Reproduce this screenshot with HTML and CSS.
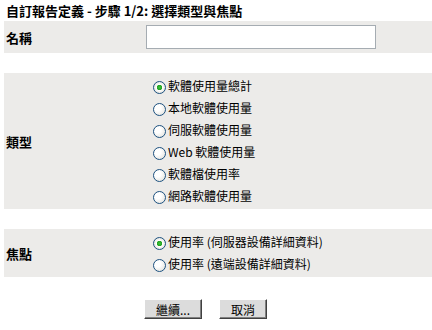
FILE: index.html
```html
<!DOCTYPE html>
<html lang="zh-Hant">
  <head>
    <meta charset="UTF-8" />
    <title>自訂報告定義</title>
    <link rel="stylesheet" href="styles.css">
  </head>
  <body>
    <h1 class="title">自訂報告定義 - 步驟 1/2: 選擇類型與焦點</h1>
    <form class="form">
      <div class="row row-name">
        <label class="label" for="name">名稱</label>
        <div class="value">
          <input class="text" id="name" type="text" autofocus>
        </div>
      </div>
      <div class="gap"></div>
      <div class="row row-list">
        <span class="label">類型</span>
        <div class="value">
          <label class="opt"><input type="radio" name="type" checked>軟體使用量總計</label>
          <label class="opt"><input type="radio" name="type">本地軟體使用量</label>
          <label class="opt"><input type="radio" name="type">伺服軟體使用量</label>
          <label class="opt"><input type="radio" name="type">Web 軟體使用量</label>
          <label class="opt"><input type="radio" name="type">軟體檔使用率</label>
          <label class="opt"><input type="radio" name="type">網路軟體使用量</label>
        </div>
      </div>
      <div class="gap"></div>
      <div class="row row-list">
        <span class="label">焦點</span>
        <div class="value">
          <label class="opt"><input type="radio" name="focus" checked>使用率 (伺服器設備詳細資料)</label>
          <label class="opt"><input type="radio" name="focus">使用率 (遠端設備詳細資料)</label>
        </div>
      </div>
      <div class="buttons">
        <button type="button" class="btn">繼續...</button>
        <button type="button" class="btn">取消</button>
      </div>
    </form>
  </body>
</html>
```

FILE: styles.css
```css
* {
  margin: 0;
  padding: 0;
  box-sizing: border-box;
}
body {
  font-family: "Noto Sans CJK TC", "Liberation Sans", sans-serif;
  font-size: 12px;
  color: #000;
  background: #fff;
}
.title {
  font-size: 13px;
  font-weight: bold;
  line-height: 21px;
  padding-left: 6px;
}
.form {
  margin-left: 4px;
}
.row {
  display: grid;
  grid-template-columns: 142px 1fr;
  align-items: center;
  background: #ecebe9;
}
.row-name {
  padding: 4px 0;
}
.row-list {
  padding: 2px 0;
}
.gap {
  height: 20px;
}
.label {
  font-size: 13px;
  font-weight: bold;
  padding-left: 2px;
}
.text {
  display: block;
  width: 230px;
  height: 24px;
  border: 1px solid #a5acb2;
  background: #fff;
  font: inherit;
  padding: 0 2px;
  outline: none;
  caret-color: #000;
}
.opt {
  display: flex;
  align-items: center;
  height: 22px;
  line-height: 22px;
  white-space: nowrap;
}
.opt input {
  appearance: none;
  -webkit-appearance: none;
  width: 13px;
  height: 13px;
  margin: 2px 2px 0 7px;
  border: 1px solid #1c5180;
  border-radius: 50%;
  background: radial-gradient(circle at 35% 35%, #ffffff 30%, #dcdcd6 100%);
}
.opt input:checked {
  background: radial-gradient(circle, #3dc23d 0, #21a121 2.5px, #ffffff 3px, #eeeeea 60%, #dcdcd6 100%);
}
.buttons {
  display: flex;
  gap: 17px;
  padding: 22px 0 0 140px;
}
.btn {
  height: 20px;
  padding: 0 11px;
  font: inherit;
  line-height: 17px;
  background: #dcdcdc;
  border: 1px solid;
  border-color: #ffffff #404040 #404040 #ffffff;
  box-shadow: inset -1px -1px 0 #808080;
}
```
